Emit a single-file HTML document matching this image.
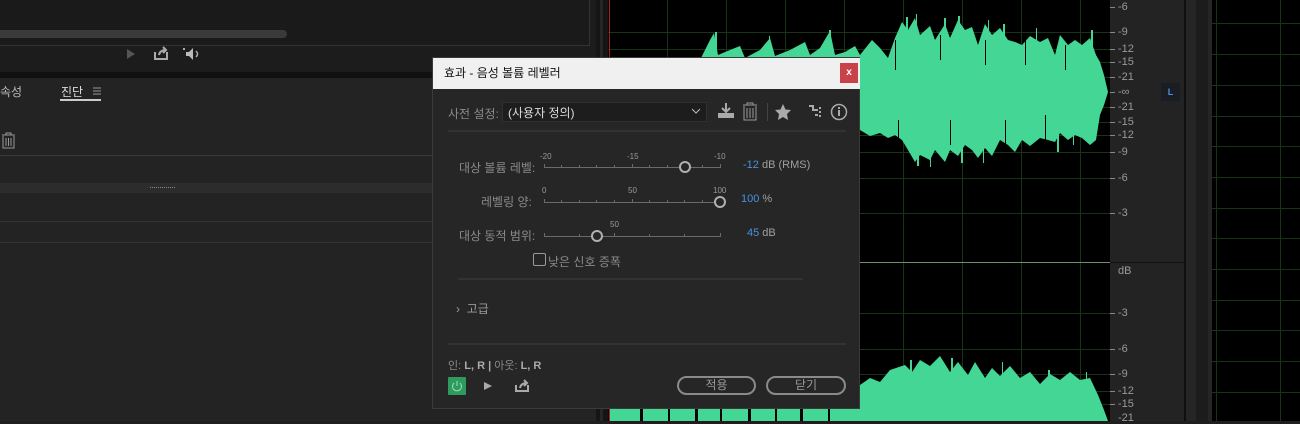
<!DOCTYPE html>
<html><head><meta charset="utf-8"><style>
*{margin:0;padding:0;box-sizing:border-box}
body{width:1300px;height:421px;overflow:hidden;background:#1e1e1e;position:relative;font-family:"Liberation Sans","Noto Sans CJK KR",sans-serif;font-size:12px;color:#a0a0a0}
.a{position:absolute}
.t{position:absolute;white-space:nowrap}
.rl{position:absolute;left:1118px;font-size:11px;color:#9a9a9a;line-height:11px}
.btn{position:absolute;height:19px;border:2px solid #8a8a8a;border-radius:10px;color:#9a9a9a;text-align:center;line-height:15px;font-size:12px}
.sl{position:absolute;height:1px;background:#6a6a6a}
.knob{position:absolute;width:12px;height:12px;border:2px solid #b0b0b0;border-radius:50%;background:#262626}
.tk{position:absolute;width:1px;height:3px;background:#6a6a6a}
.tl{position:absolute;font-size:8px;color:#9a9a9a}
.blue{color:#4b8fe0}
</style></head><body>
<div class="a" style="left:0;top:0;width:596px;height:72px;background:#1c1c1c"></div>
<div class="a" style="left:0;top:0;width:590px;height:46px;border-right:1px solid #333;border-bottom:1px solid #333;background:#1a1a1a"></div>
<div class="a" style="left:0;top:30px;width:287px;height:8px;background:#3a3a3a;border-radius:0 4px 4px 0"></div>
<svg class="a" style="left:120px;top:45px" width="90" height="20">
<polygon points="7,4 15,9 7,14" fill="#555"/>
<path d="M35 7 v7 h12 v-7" stroke="#aaa" stroke-width="2" fill="none"/><path d="M39 10 q1-5 7-5 M43 2 l3 3 -3 3" stroke="#aaa" stroke-width="2" fill="none"/>
<rect x="63" y="3" width="2" height="2" fill="#aaa"/><path d="M66 7 h3 l4-4 v12 l-4-4 h-3z" fill="#bbb"/><path d="M76 6 q3 3 0 6" stroke="#aaa" stroke-width="1.5" fill="none"/>
</svg>
<div class="a" style="left:0;top:72px;width:596px;height:6px;background:#111"></div>
<div class="a" style="left:0;top:78px;width:596px;height:343px;background:#232323"></div>
<div class="t" style="left:0;top:83px;color:#bbb;font-size:12px">속성</div>
<div class="t" style="left:61px;top:83px;color:#ddd;font-size:12px">진단</div>
<svg class="a" style="left:92px;top:86px" width="10" height="10"><path d="M1 2h8M1 5h8M1 8h8" stroke="#999"/></svg>
<div class="a" style="left:60px;top:99px;width:41px;height:2px;background:#ccc"></div>
<svg class="a" style="left:0;top:132px" width="18" height="18"><path d="M2 3h13 M6 3v-2h5v2 M3 4v12h11v-12 M6 6v8 M8.5 6v8 M11 6v8" stroke="#999" fill="none"/></svg>
<div class="a" style="left:0;top:155px;width:596px;height:1px;background:#383838"></div>
<div class="a" style="left:0;top:183px;width:596px;height:10px;background:#2c2c2c"></div>
<div class="a" style="left:150px;top:187px;width:25px;height:2px;border-top:1px dotted #888"></div>
<div class="a" style="left:0;top:221px;width:596px;height:1px;background:#333"></div>
<div class="a" style="left:0;top:242px;width:596px;height:1px;background:#333"></div>
<div class="a" style="left:596px;top:0;width:12px;height:421px;background:#151515"></div>
<div class="a" style="left:600px;top:0;width:3px;height:421px;background:#262626"></div>
<div class="a" style="left:608px;top:0;width:502px;height:421px;background:#000"></div>
<svg class="a" style="left:0;top:0" width="1300" height="421">
<g stroke="#173417" stroke-width="1">
<line x1="667.5" y1="0" x2="667.5" y2="421"/><line x1="726.5" y1="0" x2="726.5" y2="421"/><line x1="785.5" y1="0" x2="785.5" y2="421"/><line x1="844.5" y1="0" x2="844.5" y2="421"/><line x1="903.5" y1="0" x2="903.5" y2="421"/><line x1="962.5" y1="0" x2="962.5" y2="421"/><line x1="1021.5" y1="0" x2="1021.5" y2="421"/><line x1="1080.5" y1="0" x2="1080.5" y2="421"/>
<line x1="608" y1="32.5" x2="1110" y2="32.5"/><line x1="608" y1="49.5" x2="1110" y2="49.5"/><line x1="608" y1="62.5" x2="1110" y2="62.5"/><line x1="608" y1="77.5" x2="1110" y2="77.5"/><line x1="608" y1="107.5" x2="1110" y2="107.5"/><line x1="608" y1="122.5" x2="1110" y2="122.5"/><line x1="608" y1="135.5" x2="1110" y2="135.5"/><line x1="608" y1="152.5" x2="1110" y2="152.5"/><line x1="608" y1="178.5" x2="1110" y2="178.5"/><line x1="608" y1="213.5" x2="1110" y2="213.5"/><line x1="608" y1="313.5" x2="1110" y2="313.5"/><line x1="608" y1="349.5" x2="1110" y2="349.5"/><line x1="608" y1="374.5" x2="1110" y2="374.5"/><line x1="608" y1="391.5" x2="1110" y2="391.5"/><line x1="608" y1="404.5" x2="1110" y2="404.5"/>
</g>
<line x1="608" y1="262.5" x2="1110" y2="262.5" stroke="#6f8f6f"/>
<line x1="609.5" y1="0" x2="609.5" y2="421" stroke="#b02020"/>
<polygon fill="#43d694" points="700,60 710,40 714,33 718,55 730,50 740,46 745,58 760,50 770,38 775,56 790,50 805,42 810,55 820,48 830,31 835,55 845,52 855,46 860,55 868,45 872,40 880,48 888,58 895,38 902,22 908,30 915,18 920,35 930,26 935,40 945,24 950,38 958,20 965,30 972,27 978,45 985,24 992,35 1000,28 1008,40 1015,42 1022,45 1030,36 1040,42 1048,38 1055,55 1060,35 1068,45 1075,40 1082,45 1090,38 1096,55 1100,62 1104,75 1108,92 1104,105 1100,115 1096,140 1090,145 1082,138 1075,135 1068,140 1060,133 1055,142 1048,140 1040,138 1030,146 1022,140 1015,152 1008,145 1000,140 992,156 985,148 978,158 972,150 965,145 958,156 950,150 945,162 935,150 930,160 920,155 915,162 908,150 902,140 895,135 888,138 880,133 870,136 860,130 840,128 800,126 760,126 720,125 700,124"/>
<g fill="#43d694">
<rect x="715" y="32" width="2" height="30"/><rect x="769" y="36" width="1" height="20"/><rect x="829" y="30" width="2" height="30"/><rect x="906" y="17" width="2" height="30"/><rect x="916" y="14" width="1" height="30"/><rect x="944" y="18" width="2" height="30"/><rect x="958" y="16" width="2" height="30"/><rect x="988" y="20" width="1" height="30"/><rect x="1003" y="24" width="2" height="30"/><rect x="1036" y="28" width="1" height="30"/><rect x="1091" y="30" width="2" height="30"/>
<rect x="917" y="130" width="2" height="36"/><rect x="930" y="130" width="1" height="37"/><rect x="961" y="130" width="2" height="33"/><rect x="983" y="130" width="1" height="33"/><rect x="1057" y="120" width="2" height="32"/><rect x="1073" y="120" width="1" height="25"/>
</g>
<g fill="#000"><rect x="895" y="40" width="1" height="30"/><rect x="940" y="35" width="1" height="25"/><rect x="985" y="40" width="1" height="25"/><rect x="1025" y="40" width="1" height="25"/><rect x="1065" y="45" width="1" height="25"/><rect x="898" y="120" width="1" height="25"/><rect x="950" y="120" width="1" height="25"/><rect x="1005" y="120" width="1" height="25"/><rect x="1045" y="115" width="1" height="25"/></g>
<polygon fill="#43d694" points="610,421 610,400 700,398 712,385 720,396 800,392 860,385 870,378 880,382 890,370 905,365 912,372 920,360 930,366 940,356 950,372 958,362 968,375 975,362 985,378 992,368 1000,376 1010,366 1020,378 1030,372 1040,384 1050,374 1060,380 1070,372 1080,380 1090,378 1098,395 1104,410 1108,421"/>
<g fill="#43d694"><rect x="910" y="360" width="2" height="20"/><rect x="951" y="358" width="2" height="20"/><rect x="1002" y="362" width="1" height="20"/><rect x="1048" y="370" width="2" height="20"/><rect x="1086" y="372" width="1" height="20"/></g>
<g fill="#000"><rect x="640" y="405" width="3" height="16"/><rect x="668" y="405" width="2" height="16"/><rect x="695" y="405" width="3" height="16"/><rect x="720" y="405" width="2" height="16"/><rect x="748" y="405" width="3" height="16"/><rect x="775" y="405" width="2" height="16"/><rect x="800" y="405" width="3" height="16"/><rect x="828" y="405" width="2" height="16"/></g>
</svg>
<div class="a" style="left:1110px;top:0;width:74px;height:421px;background:#232323"></div>
<div class="a" style="left:1110px;top:262px;width:74px;height:1px;background:#111"></div>
<div class="a" style="left:1184px;top:0;width:2px;height:421px;background:#0f0f0f"></div>
<div class="a" style="left:1186px;top:0;width:26px;height:421px;background:#252525"></div>
<div class="a" style="left:1196px;top:0;width:12px;height:421px;background:#1c1c1c"></div>
<div class="a" style="left:1212px;top:0;width:88px;height:421px;background:#000"></div>
<svg class="a" style="left:1212px;top:0" width="88" height="421"><g stroke="#173417"><line x1="4.5" y1="0" x2="4.5" y2="421"/><line x1="68.5" y1="0" x2="68.5" y2="421"/>
<line x1="0" y1="23.5" x2="88" y2="23.5"/><line x1="0" y1="54.5" x2="88" y2="54.5"/><line x1="0" y1="85.5" x2="88" y2="85.5"/><line x1="0" y1="116.5" x2="88" y2="116.5"/><line x1="0" y1="146.5" x2="88" y2="146.5"/><line x1="0" y1="177.5" x2="88" y2="177.5"/><line x1="0" y1="208.5" x2="88" y2="208.5"/><line x1="0" y1="238.5" x2="88" y2="238.5"/><line x1="0" y1="269.5" x2="88" y2="269.5"/><line x1="0" y1="300.5" x2="88" y2="300.5"/><line x1="0" y1="330.5" x2="88" y2="330.5"/><line x1="0" y1="361.5" x2="88" y2="361.5"/><line x1="0" y1="392.5" x2="88" y2="392.5"/></g></svg>
<svg class="a" style="left:1110px;top:0" width="8" height="421"><g stroke="#888">
<line x1="0" y1="7.5" x2="5" y2="7.5"/><line x1="0" y1="32.5" x2="5" y2="32.5"/><line x1="0" y1="49.5" x2="5" y2="49.5"/><line x1="0" y1="62.5" x2="5" y2="62.5"/><line x1="0" y1="77.5" x2="5" y2="77.5"/><line x1="0" y1="92.5" x2="5" y2="92.5"/><line x1="0" y1="107.5" x2="5" y2="107.5"/><line x1="0" y1="122.5" x2="5" y2="122.5"/><line x1="0" y1="135.5" x2="5" y2="135.5"/><line x1="0" y1="152.5" x2="5" y2="152.5"/><line x1="0" y1="178.5" x2="5" y2="178.5"/><line x1="0" y1="213.5" x2="5" y2="213.5"/><line x1="0" y1="313.5" x2="5" y2="313.5"/><line x1="0" y1="349.5" x2="5" y2="349.5"/><line x1="0" y1="374.5" x2="5" y2="374.5"/><line x1="0" y1="391.5" x2="5" y2="391.5"/><line x1="0" y1="404.5" x2="5" y2="404.5"/></g></svg>
<div class="rl" style="top:2px">-6</div><div class="rl" style="top:27px">-9</div><div class="rl" style="top:44px">-12</div><div class="rl" style="top:57px">-15</div><div class="rl" style="top:72px">-21</div><div class="rl" style="top:87px">-∞</div><div class="rl" style="top:102px">-21</div><div class="rl" style="top:117px">-15</div><div class="rl" style="top:130px">-12</div><div class="rl" style="top:147px">-9</div><div class="rl" style="top:173px">-6</div><div class="rl" style="top:208px">-3</div><div class="rl" style="top:266px">dB</div><div class="rl" style="top:308px">-3</div><div class="rl" style="top:344px">-6</div><div class="rl" style="top:369px">-9</div><div class="rl" style="top:386px">-12</div><div class="rl" style="top:399px">-15</div><div class="rl" style="top:413px">-21</div>
<div class="a" style="left:1161px;top:83px;width:19px;height:18px;background:#1a1d23;border-radius:2px;color:#4b8fe0;font-size:9px;text-align:center;line-height:18px;font-weight:bold">L</div>
<div class="a" style="left:432px;top:57px;width:428px;height:352px;background:#262626;border:1px solid #3a3a3a"></div>
<div class="a" style="left:433px;top:58px;width:427px;height:31px;background:#f0f0f0"></div>
<div class="t" style="left:444px;top:64px;color:#111;font-size:12px">효과 - 음성 볼륨 레벨러</div>
<div class="a" style="left:840px;top:63px;width:18px;height:20px;background:#c8424a;color:#fff;font-size:10px;font-weight:bold;text-align:center;line-height:19px">x</div>
<div class="t" style="left:448px;top:105px;color:#8a8a8a">사전 설정:</div>
<div class="a" style="left:502px;top:102px;width:205px;height:20px;background:#1d1d1d;border:1px solid #303030"></div>
<div class="t" style="left:508px;top:104px;color:#ddd;font-size:12px">(사용자 정의)</div>
<svg class="a" style="left:690px;top:105px" width="12" height="12"><path d="M2 4l4 4 4-4" stroke="#bbb" fill="none"/></svg>
<svg class="a" style="left:716px;top:101px" width="140" height="22">
<path d="M10 2v8 M6 7l4 4 4-4" stroke="#aaa" stroke-width="2" fill="none"/><rect x="2" y="12" width="16" height="5" fill="#aaa"/>
<path d="M27 4h14 M31 4v-2h6v2 M28 5v14h12v-14 M31 7v10 M34 7v10 M37 7v10" stroke="#999" fill="none"/>
<line x1="51.5" y1="2" x2="51.5" y2="20" stroke="#444"/>
<polygon points="67,3 69.5,8.5 75,9 71,13 72,19 67,16 62,19 63,13 59,9 64.5,8.5" fill="#aaa"/>
<path d="M93 5h4v4h5 M104 6v2 M104 10v2 M104 14v2 M99 14h3" stroke="#aaa" stroke-width="2" fill="none"/>
<circle cx="123" cy="11" r="7.5" stroke="#aaa" stroke-width="1.5" fill="none"/><rect x="122" y="9" width="2" height="6" fill="#aaa"/><rect x="122" y="6" width="2" height="2" fill="#aaa"/>
</svg>
<div class="a" style="left:448px;top:130px;width:398px;height:2px;background:#323232"></div>
<div class="t" style="left:459px;top:159px;color:#8a8a8a">대상 볼륨 레벨:</div>
<div class="sl" style="left:544px;top:167px;width:177px"></div>
<div class="tk" style="left:544px;top:164px;height:4px"></div><div class="tk" style="left:561px;top:165px"></div><div class="tk" style="left:579px;top:165px"></div><div class="tk" style="left:596px;top:165px"></div><div class="tk" style="left:614px;top:165px"></div><div class="tk" style="left:632px;top:164px;height:4px"></div><div class="tk" style="left:649px;top:165px"></div><div class="tk" style="left:667px;top:165px"></div><div class="tk" style="left:702px;top:165px"></div><div class="tk" style="left:720px;top:164px;height:4px"></div>
<div class="tl" style="left:540px;top:152px">-20</div><div class="tl" style="left:627px;top:152px">-15</div><div class="tl" style="left:714px;top:152px">-10</div>
<div class="knob" style="left:679px;top:161px"></div>
<div class="t" style="left:743px;top:159px;font-size:11px"><span class="blue">-12</span> dB (RMS)</div>
<div class="t" style="left:481px;top:193px;color:#8a8a8a">레벨링 양:</div>
<div class="sl" style="left:544px;top:202px;width:177px"></div>
<div class="tk" style="left:544px;top:199px;height:4px"></div><div class="tk" style="left:561px;top:200px"></div><div class="tk" style="left:579px;top:200px"></div><div class="tk" style="left:596px;top:200px"></div><div class="tk" style="left:614px;top:200px"></div><div class="tk" style="left:632px;top:199px;height:4px"></div><div class="tk" style="left:649px;top:200px"></div><div class="tk" style="left:667px;top:200px"></div><div class="tk" style="left:684px;top:200px"></div><div class="tk" style="left:702px;top:200px"></div>
<div class="tl" style="left:542px;top:186px">0</div><div class="tl" style="left:628px;top:186px">50</div><div class="tl" style="left:713px;top:186px">100</div>
<div class="knob" style="left:714px;top:196px"></div>
<div class="t" style="left:741px;top:193px;font-size:11px"><span class="blue">100</span> %</div>
<div class="t" style="left:459px;top:227px;color:#8a8a8a">대상 동적 범위:</div>
<div class="sl" style="left:544px;top:236px;width:177px"></div>
<div class="tk" style="left:544px;top:233px;height:4px"></div><div class="tk" style="left:579px;top:234px"></div><div class="tk" style="left:614px;top:233px;height:4px"></div><div class="tk" style="left:649px;top:234px"></div><div class="tk" style="left:684px;top:234px"></div><div class="tk" style="left:720px;top:233px;height:4px"></div>
<div class="tl" style="left:610px;top:220px">50</div>
<div class="knob" style="left:591px;top:230px"></div>
<div class="t" style="left:747px;top:227px;font-size:11px"><span class="blue">45</span> dB</div>
<div class="a" style="left:533px;top:253px;width:13px;height:13px;border:1px solid #999;border-radius:2px"></div>
<div class="t" style="left:548px;top:253px;color:#8a8a8a">낮은 신호 증폭</div>
<div class="a" style="left:458px;top:278px;width:345px;height:2px;background:#323232"></div>
<div class="t" style="left:456px;top:300px;color:#9a9a9a">›&nbsp; 고급</div>
<div class="a" style="left:448px;top:343px;width:398px;height:2px;background:#323232"></div>
<div class="t" style="left:448px;top:357px;color:#8a8a8a;font-size:11px">인: <b style="color:#aaa">L, R</b> <b style="color:#aaa">|</b> 아웃: <b style="color:#aaa">L, R</b></div>
<div class="a" style="left:448px;top:377px;width:18px;height:18px;background:#2f9a5e;border-radius:1px"></div>
<svg class="a" style="left:448px;top:377px" width="90" height="18"><path d="M6 6a4.5 4.5 0 1 0 6 0" stroke="#9fe0b8" fill="none"/><line x1="9" y1="4" x2="9" y2="9" stroke="#9fe0b8"/>
<polygon points="36,5 44,9 36,13" fill="#aaa"/>
<path d="M68 8v6h12v-6" stroke="#aaa" stroke-width="2" fill="none"/><path d="M72 11q1-5 7-5 M76 3l3 3-3 3" stroke="#aaa" stroke-width="2" fill="none"/></svg>
<div class="btn" style="left:677px;top:376px;width:79px">적용</div>
<div class="btn" style="left:766px;top:376px;width:80px">닫기</div>
</body></html>
